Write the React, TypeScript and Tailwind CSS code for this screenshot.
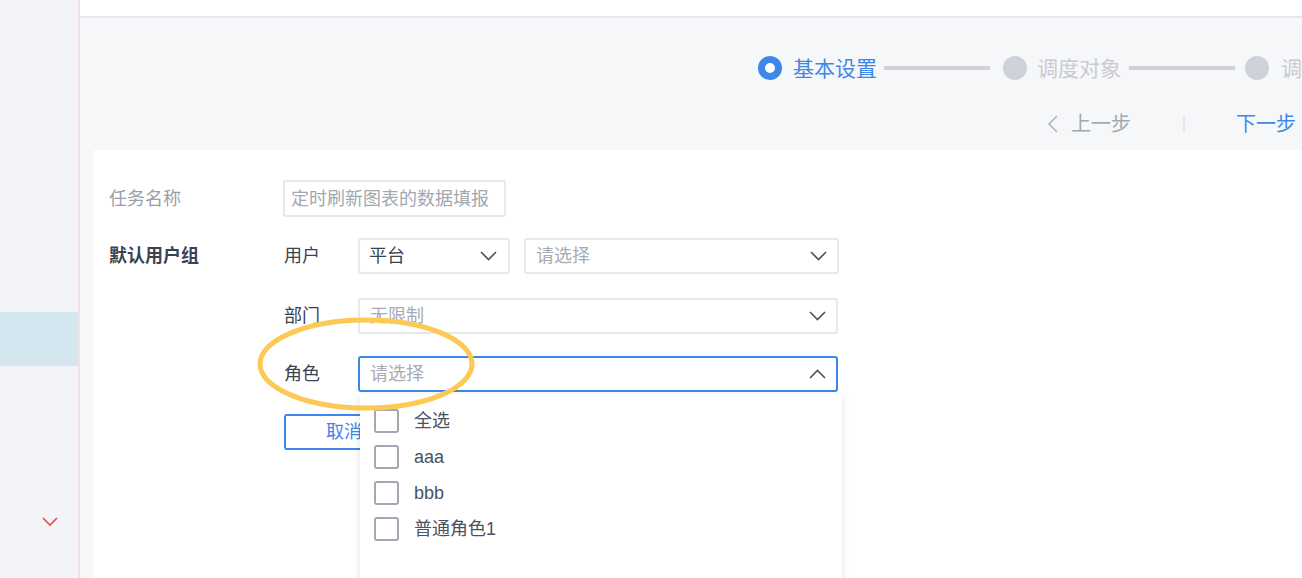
import React from "react";

const Chevron = ({ up = false }: { up?: boolean }) => (
  <svg width="17" height="10" viewBox="0 0 17 10" className="shrink-0">
    <polyline
      points={up ? "1,9 8.5,1.5 16,9" : "1,1 8.5,8.5 16,1"}
      fill="none"
      stroke="#4a5161"
      strokeWidth="1.6"
    />
  </svg>
);

const Checkbox = () => (
  <div className="w-[25px] h-[24px] rounded-[3px] border-2 border-[#a3a7b1] bg-white shrink-0" />
);

export default function App() {
  return (
    <div className="w-[1302px] h-[578px] overflow-hidden flex font-['Liberation_Sans','Noto_Sans_CJK_SC',sans-serif] text-[#3b4252]">
      {/* Sidebar */}
      <div className="w-[78px] h-full bg-[#f2f4f8] flex flex-col shrink-0">
        <div className="h-[312px]" />
        <div className="h-[54px] bg-[#d4e7f0]" />
        <div className="h-[151px]" />
        <div className="flex justify-end pr-[20px]">
          <svg width="16" height="10" viewBox="0 0 16 10">
            <polyline points="1,1 8,8 15,1" fill="none" stroke="#e24c4f" strokeWidth="1.6" />
          </svg>
        </div>
      </div>
      <div className="w-[2px] h-full bg-[#f1e1e5] shrink-0" />

      {/* Main */}
      <div className="flex-1 h-full bg-[#f6f7f9] flex flex-col min-w-0">
        <div className="h-[18px] bg-white border-b-2 border-[#e6e7eb] shrink-0" />

        {/* Steps */}
        <div className="mt-[38px] h-[24px] flex items-center pl-[678px] whitespace-nowrap overflow-hidden shrink-0">
          <div className="w-[24px] h-[24px] rounded-full bg-[#3d87ea] flex items-center justify-center shrink-0">
            <div className="w-[10px] h-[10px] rounded-full bg-white" />
          </div>
          <span className="ml-[11px] text-[21px] leading-none text-[#3d87ea]">基本设置</span>
          <div className="ml-[7px] w-[106px] h-[4px] bg-[#d0d2d8] shrink-0" />
          <div className="ml-[13px] w-[24px] h-[24px] rounded-full bg-[#d0d2d9] shrink-0" />
          <span className="ml-[10px] text-[21px] leading-none text-[#c9cbd1]">调度对象</span>
          <div className="ml-[8px] w-[106px] h-[4px] bg-[#d0d2d8] shrink-0" />
          <div className="ml-[10px] w-[24px] h-[24px] rounded-full bg-[#d0d2d9] shrink-0" />
          <span className="ml-[12px] text-[21px] leading-none text-[#c9cbd1]">调度设置</span>
        </div>

        {/* Prev / Next */}
        <div className="mt-[30px] h-[28px] flex items-center justify-end pr-[6px] shrink-0">
          <svg width="12" height="20" viewBox="0 0 12 20" className="shrink-0">
            <polyline points="10,2 2,10 10,18" fill="none" stroke="#aeb2ba" strokeWidth="1.5" />
          </svg>
          <span className="ml-[12px] text-[20px] leading-none text-[#a4a8b1]">上一步</span>
          <div className="ml-[52px] w-[2px] h-[18px] bg-[#e4e6ea]" />
          <span className="ml-[51px] text-[20px] leading-none text-[#3d87ea]">下一步</span>
        </div>

        {/* Panel */}
        <div className="mt-[12px] ml-[14px] flex-1 bg-white relative pl-[15px] pt-[30px] text-[18px]">
          {/* 任务名称 */}
          <div className="flex items-center h-[37px]">
            <div className="w-[174px] text-[#9a9ea9] leading-none">任务名称</div>
            <div className="w-[223px] h-[37px] border-2 border-[#e7e8ec] rounded-[3px] flex items-center pl-[6px] text-[#a3a7b0] leading-none whitespace-nowrap">
              定时刷新图表的数据填报
            </div>
          </div>

          {/* 默认用户组 */}
          <div className="flex mt-[21px]">
            <div className="w-[175px] h-[36px] flex items-center font-bold leading-none text-[#3b4252]">默认用户组</div>
            <div className="flex flex-col">
              <div className="flex items-center h-[36px]">
                <div className="w-[74px] leading-none">用户</div>
                <div className="w-[152px] h-[36px] border-2 border-[#e7e8ec] rounded-[3px] flex items-center justify-between pl-[9px] pr-[11px]">
                  <span className="leading-none">平台</span>
                  <Chevron />
                </div>
                <div className="ml-[14px] w-[315px] h-[36px] border-2 border-[#e7e8ec] rounded-[3px] flex items-center justify-between pl-[10px] pr-[10px]">
                  <span className="leading-none text-[#a8abb3]">请选择</span>
                  <Chevron />
                </div>
              </div>

              <div className="flex items-center h-[36px] mt-[24px]">
                <div className="w-[74px] leading-none">部门</div>
                <div className="w-[480px] h-[36px] border-2 border-[#e7e8ec] rounded-[3px] flex items-center justify-between pl-[10px] pr-[10px]">
                  <span className="leading-none text-[#a8abb3]">无限制</span>
                  <Chevron />
                </div>
              </div>

              <div className="flex items-center h-[36px] mt-[22px]">
                <div className="w-[74px] leading-none">角色</div>
                <div className="relative w-[480px] h-[36px] border-2 border-[#3d87ea] rounded-[3px] flex items-center justify-between pl-[10px] pr-[10px]">
                  <span className="leading-none text-[#a8abb3]">请选择</span>
                  <Chevron up />
                  {/* Dropdown */}
                  <div className="absolute left-0 top-[36px] w-[482px] h-[200px] bg-white rounded-[3px] shadow-[0_2px_8px_rgba(0,0,0,0.12)] z-10 pt-[9px] pl-[14px] flex flex-col">
                    {["全选", "aaa", "bbb", "普通角色1"].map((t) => (
                      <div key={t} className="h-[36px] flex items-center">
                        <Checkbox />
                        <span className="ml-[15px] leading-none text-[#4a5161]">{t}</span>
                      </div>
                    ))}
                  </div>
                </div>
              </div>

              <div className="mt-[22px] w-[120px] h-[36px] border-2 border-[#3d87ea] rounded-[3px] flex items-center justify-center text-[#3d87ea] leading-none">
                取消
              </div>
            </div>
          </div>

          {/* Annotation ellipse */}
          <svg
            className="absolute left-[160px] top-[165px] z-20 pointer-events-none"
            width="224"
            height="98"
            viewBox="0 0 224 98"
          >
            <ellipse cx="112" cy="49" rx="106" ry="44" fill="none" stroke="#fdc955" strokeWidth="5" />
          </svg>
        </div>
      </div>
    </div>
  );
}
